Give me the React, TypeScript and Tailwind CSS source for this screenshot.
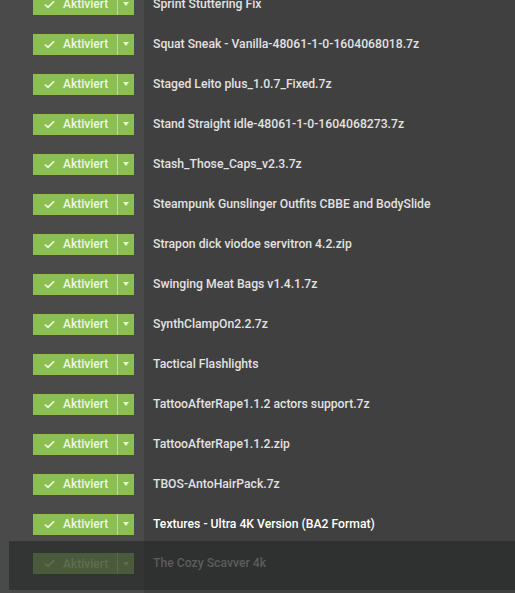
import React from 'react';

const MODS = [
  'Sprint Stuttering Fix',
  'Squat Sneak - Vanilla-48061-1-0-1604068018.7z',
  'Staged Leito plus_1.0.7_Fixed.7z',
  'Stand Straight idle-48061-1-0-1604068273.7z',
  'Stash_Those_Caps_v2.3.7z',
  'Steampunk Gunslinger Outfits CBBE and BodySlide',
  'Strapon dick viodoe servitron 4.2.zip',
  'Swinging Meat Bags v1.4.1.7z',
  'SynthClampOn2.2.7z',
  'Tactical Flashlights',
  'TattooAfterRape1.1.2 actors support.7z',
  'TattooAfterRape1.1.2.zip',
  'TBOS-AntoHairPack.7z',
  'Textures - Ultra 4K Version (BA2 Format)',
];

const Check = ({ className }: { className?: string }) => (
  <svg viewBox="0 0 12 10" width="11" height="9" className={className}>
    <path d="M1 5.2 L4.3 8.2 L11 1.5" fill="none" stroke="currentColor" strokeWidth="2" />
  </svg>
);

const StatusButton = ({ dim = false }: { dim?: boolean }) => (
  <div className={`flex h-[21px] w-[101px] items-stretch ${dim ? 'bg-[#4a5a3b] text-[#5f6e50]' : 'bg-[#8bbf4f] text-[#eef6e6]'}`}>
    <div className="flex flex-1 items-center pl-[11px] gap-[8px]">
      <Check />
      <span className="text-[12px] font-medium leading-none">Aktiviert</span>
    </div>
    <div className={`w-px ${dim ? 'bg-[#5a6a4a]' : 'bg-[#bcdc96]'}`} />
    <div className="flex w-[16px] items-center justify-center">
      <span className="block h-0 w-0 border-x-[3.5px] border-t-[4px] border-x-transparent border-t-current" />
    </div>
  </div>
);

const ModRow = ({ name, hot }: { name: string; hot?: boolean }) => (
  <div className="flex h-[40px] shrink-0">
    <div className="flex w-[144px] items-center pl-[33px] bg-[#4a4a4a]">
      <StatusButton />
    </div>
    <div className="flex flex-1 items-center pl-[9px]">
      <span className={`text-[12.2px] font-medium whitespace-nowrap ${hot ? 'text-white' : 'text-[#e2e2e2]'}`}>{name}</span>
    </div>
  </div>
);

export default function App() {
  return (
    <div className="relative h-[593px] w-[515px] overflow-hidden bg-[#404040]" style={{ fontFamily: 'Roboto, "Noto Sans", sans-serif' }}>
      <div className="flex h-[609px] flex-col -mt-[16px]">
        {MODS.map((m, i) => (
          <ModRow key={m} name={m} hot={i === MODS.length - 1} />
        ))}
        {/* empty slot left by the row being dragged */}
        <div className="flex flex-1">
          <div className="w-[144px] bg-[#4a4a4a]" />
          <div className="flex-1" />
        </div>
      </div>

      {/* row being dragged */}
      <div className="absolute left-[9px] right-0 top-[541px] flex h-[49px]">
        <div className="flex w-[135px] items-center pl-[24px] pb-[4px] bg-[#333434]">
          <StatusButton dim />
        </div>
        <div className="flex flex-1 items-center pl-[9px] pb-[4px] bg-[#2f3030]">
          <span className="text-[12.2px] font-medium text-[#5c5c5c]">The Cozy Scavver 4k</span>
        </div>
      </div>
    </div>
  );
}
